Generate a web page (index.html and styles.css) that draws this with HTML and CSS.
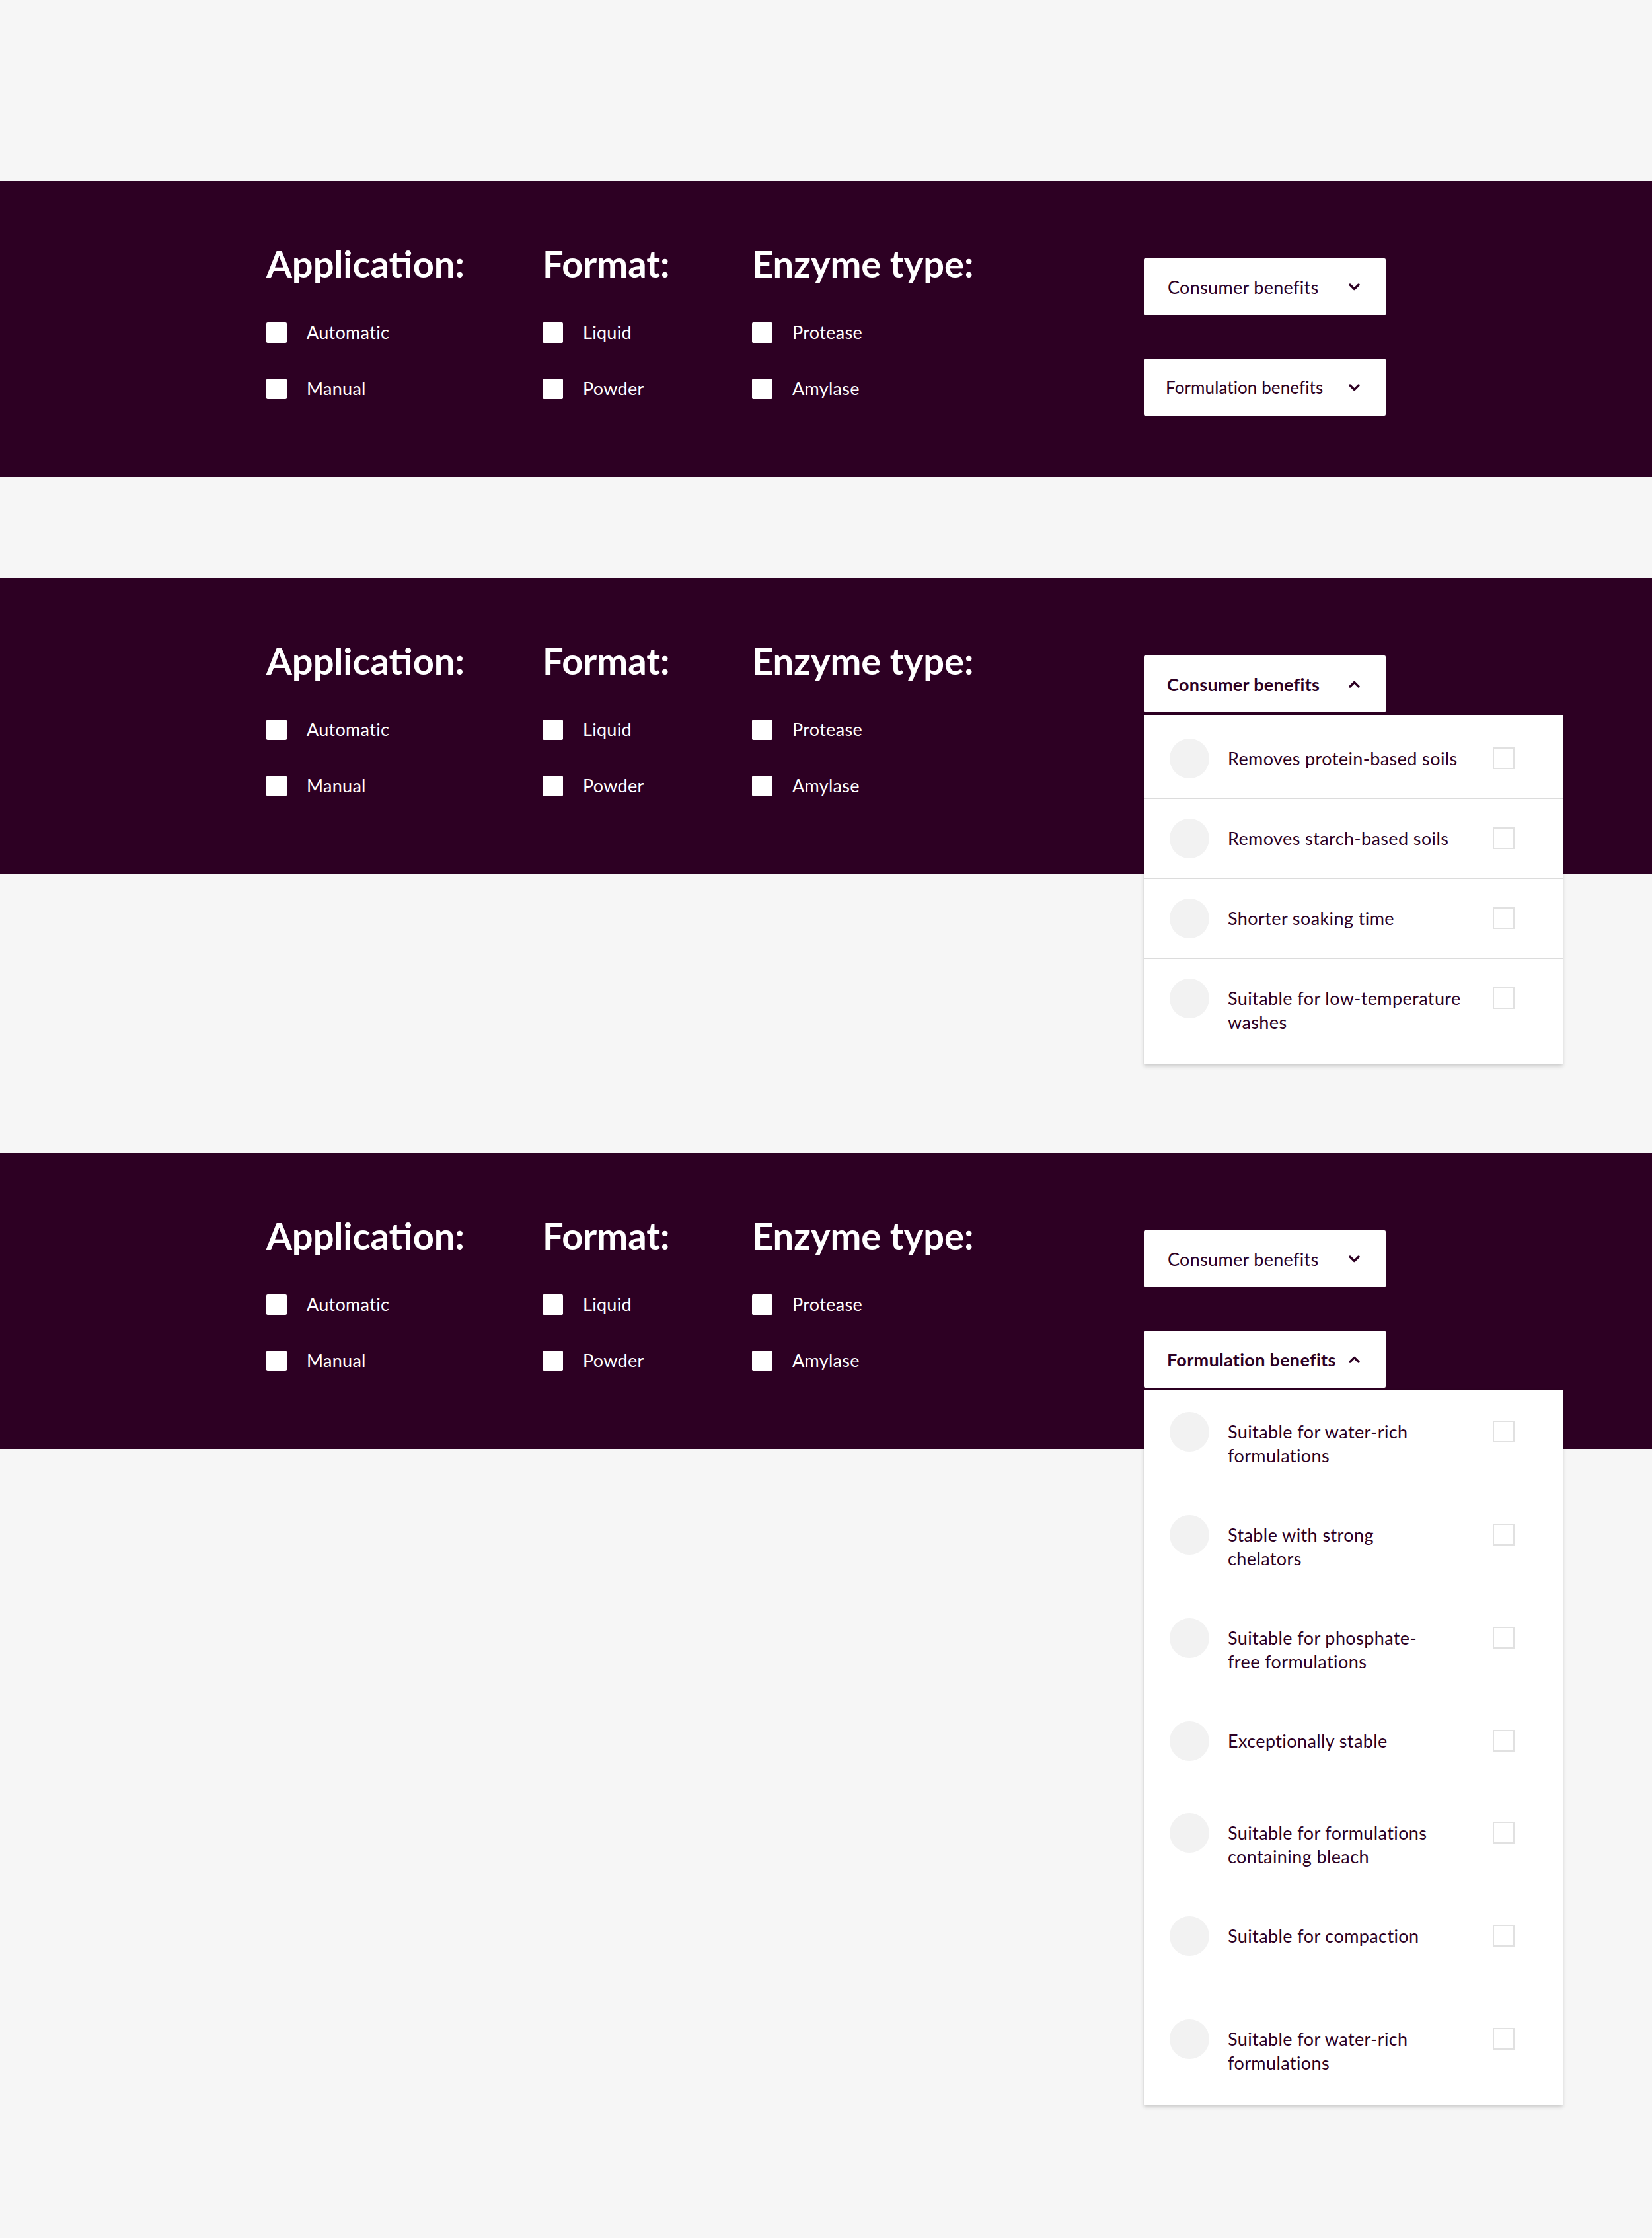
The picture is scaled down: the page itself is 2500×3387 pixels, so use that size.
FILE: index.html
```html
<!DOCTYPE html>
<html lang="en">
<head>
<meta charset="utf-8">
<title>Enzyme filters</title>
<link rel="stylesheet" href="styles.css">
</head>
<body>
<main class="page">

  <!-- State 1: both closed -->
  <section class="filters filters--one">
    <div class="filters__inner">
      <div class="group group--application">
        <h2 class="group__title">Application:</h2>
        <ul class="options">
          <li class="option"><span class="option__box"></span><span class="option__label">Automatic</span></li>
          <li class="option"><span class="option__box"></span><span class="option__label">Manual</span></li>
        </ul>
      </div>
      <div class="group group--format">
        <h2 class="group__title">Format:</h2>
        <ul class="options">
          <li class="option"><span class="option__box"></span><span class="option__label">Liquid</span></li>
          <li class="option"><span class="option__box"></span><span class="option__label">Powder</span></li>
        </ul>
      </div>
      <div class="group group--enzyme">
        <h2 class="group__title">Enzyme type:</h2>
        <ul class="options">
          <li class="option"><span class="option__box"></span><span class="option__label">Protease</span></li>
          <li class="option"><span class="option__box"></span><span class="option__label">Amylase</span></li>
        </ul>
      </div>
      <div class="dropdowns">
        <div class="dropdown">
          <button class="dropdown__toggle" type="button"><span>Consumer benefits</span><svg class="chev" viewBox="0 0 17 11" width="17" height="11"><polyline points="2,2 8.5,8.5 15,2"/></svg></button>
        </div>
        <div class="dropdown">
          <button class="dropdown__toggle dropdown__toggle--small" type="button"><span>Formulation benefits</span><svg class="chev" viewBox="0 0 17 11" width="17" height="11"><polyline points="2,2 8.5,8.5 15,2"/></svg></button>
        </div>
      </div>
    </div>
  </section>

  <!-- State 2: consumer benefits open -->
  <section class="filters filters--two">
    <div class="filters__inner">
      <div class="group group--application">
        <h2 class="group__title">Application:</h2>
        <ul class="options">
          <li class="option"><span class="option__box"></span><span class="option__label">Automatic</span></li>
          <li class="option"><span class="option__box"></span><span class="option__label">Manual</span></li>
        </ul>
      </div>
      <div class="group group--format">
        <h2 class="group__title">Format:</h2>
        <ul class="options">
          <li class="option"><span class="option__box"></span><span class="option__label">Liquid</span></li>
          <li class="option"><span class="option__box"></span><span class="option__label">Powder</span></li>
        </ul>
      </div>
      <div class="group group--enzyme">
        <h2 class="group__title">Enzyme type:</h2>
        <ul class="options">
          <li class="option"><span class="option__box"></span><span class="option__label">Protease</span></li>
          <li class="option"><span class="option__box"></span><span class="option__label">Amylase</span></li>
        </ul>
      </div>
      <div class="dropdowns">
        <div class="dropdown">
          <button class="dropdown__toggle dropdown__toggle--open" type="button"><span>Consumer benefits</span><svg class="chev" viewBox="0 0 17 11" width="17" height="11"><polyline points="2,9 8.5,2.5 15,9"/></svg></button>
          <ul class="panel panel--consumer">
            <li class="panel__item"><span class="panel__icon"></span><span class="panel__text">Removes protein-based soils</span><span class="panel__check"></span></li>
            <li class="panel__item"><span class="panel__icon"></span><span class="panel__text">Removes starch-based soils</span><span class="panel__check"></span></li>
            <li class="panel__item"><span class="panel__icon"></span><span class="panel__text">Shorter soaking time</span><span class="panel__check"></span></li>
            <li class="panel__item"><span class="panel__icon"></span><span class="panel__text">Suitable for low-temperature<br>washes</span><span class="panel__check"></span></li>
          </ul>
        </div>
      </div>
    </div>
  </section>

  <!-- State 3: formulation benefits open -->
  <section class="filters filters--three">
    <div class="filters__inner">
      <div class="group group--application">
        <h2 class="group__title">Application:</h2>
        <ul class="options">
          <li class="option"><span class="option__box"></span><span class="option__label">Automatic</span></li>
          <li class="option"><span class="option__box"></span><span class="option__label">Manual</span></li>
        </ul>
      </div>
      <div class="group group--format">
        <h2 class="group__title">Format:</h2>
        <ul class="options">
          <li class="option"><span class="option__box"></span><span class="option__label">Liquid</span></li>
          <li class="option"><span class="option__box"></span><span class="option__label">Powder</span></li>
        </ul>
      </div>
      <div class="group group--enzyme">
        <h2 class="group__title">Enzyme type:</h2>
        <ul class="options">
          <li class="option"><span class="option__box"></span><span class="option__label">Protease</span></li>
          <li class="option"><span class="option__box"></span><span class="option__label">Amylase</span></li>
        </ul>
      </div>
      <div class="dropdowns">
        <div class="dropdown">
          <button class="dropdown__toggle" type="button"><span>Consumer benefits</span><svg class="chev" viewBox="0 0 17 11" width="17" height="11"><polyline points="2,2 8.5,8.5 15,2"/></svg></button>
        </div>
        <div class="dropdown">
          <button class="dropdown__toggle dropdown__toggle--open" type="button"><span>Formulation benefits</span><svg class="chev" viewBox="0 0 17 11" width="17" height="11"><polyline points="2,9 8.5,2.5 15,9"/></svg></button>
          <ul class="panel">
            <li class="panel__item"><span class="panel__icon"></span><span class="panel__text">Suitable for water-rich<br>formulations</span><span class="panel__check"></span></li>
            <li class="panel__item"><span class="panel__icon"></span><span class="panel__text">Stable with strong<br>chelators</span><span class="panel__check"></span></li>
            <li class="panel__item"><span class="panel__icon"></span><span class="panel__text">Suitable for phosphate-<br>free formulations</span><span class="panel__check"></span></li>
            <li class="panel__item panel__item--mid"><span class="panel__icon"></span><span class="panel__text">Exceptionally stable</span><span class="panel__check"></span></li>
            <li class="panel__item"><span class="panel__icon"></span><span class="panel__text">Suitable for formulations<br>containing bleach</span><span class="panel__check"></span></li>
            <li class="panel__item panel__item--tall"><span class="panel__icon"></span><span class="panel__text">Suitable for compaction</span><span class="panel__check"></span></li>
            <li class="panel__item"><span class="panel__icon"></span><span class="panel__text">Suitable for water-rich<br>formulations</span><span class="panel__check"></span></li>
          </ul>
        </div>
      </div>
    </div>
  </section>

</main>
</body>
</html>
```

FILE: styles.css
```css
*, *::before, *::after {
  box-sizing: border-box;
}

html, body {
  margin: 0;
  padding: 0;
  background: #f6f6f6;
}

body {
  font-family: Lato, "Noto Sans", "Liberation Sans", sans-serif;
  color: #2d0023;
  min-height: 3387px;
}

.page {
  padding-top: 274px;
}

.filters {
  background: #2d0023;
  height: 448px;
  padding: 92px 0 0 403px;
}

.filters--one {
  margin-bottom: 153px;
}

.filters--two {
  margin-bottom: 422px;
}

.filters__inner {
  display: flex;
  align-items: flex-start;
}

.group--application { width: 418px; }
.group--format { width: 317px; }
.group--enzyme { width: 593px; }

.group__title {
  margin: 0;
  font-size: 56px;
  line-height: 66px;
  font-weight: 700;
  color: #fff;
}

.options {
  list-style: none;
  margin: 51px 0 0;
  padding: 0;
  display: flex;
  flex-direction: column;
  gap: 45px;
}

.option {
  display: flex;
  align-items: center;
  height: 40px;
  gap: 30px;
}

.option__box {
  width: 31px;
  height: 31px;
  background: #fff;
  border-radius: 2px;
  flex: none;
}

.option__label {
  font-size: 27px;
  line-height: 36px;
  letter-spacing: 0.3px;
  color: #fff;
}

.dropdowns {
  display: flex;
  flex-direction: column;
  gap: 66px;
  margin-top: 25px;
}

.dropdown {
  position: relative;
  width: 366px;
}

.dropdown__toggle {
  width: 366px;
  height: 86px;
  display: flex;
  align-items: center;
  justify-content: space-between;
  padding: 0 39px 0 36px;
  background: #fff;
  border: 0;
  border-radius: 2px;
  font-family: inherit;
  font-size: 27px;
  font-weight: 400;
  letter-spacing: 0.3px;
  color: #2d0023;
  cursor: pointer;
}

.dropdown__toggle--small {
  font-size: 26px;
  letter-spacing: 0.1px;
  padding-left: 33px;
}

.dropdown__toggle--open {
  font-weight: 700;
  padding-left: 35px;
}

.chev {
  flex: none;
  fill: none;
  stroke: #2d0023;
  stroke-width: 3.4;
  stroke-linecap: round;
  stroke-linejoin: round;
}

.panel {
  position: absolute;
  top: calc(100% + 4px);
  left: 0;
  z-index: 2;
  width: 634px;
  margin: 0;
  padding: 3px 0 5px;
  list-style: none;
  background: #fff;
  box-shadow: 0 3px 6px rgba(0, 0, 0, 0.16), 0 0 2px rgba(0, 0, 0, 0.06);
}

.panel--consumer {
  padding-top: 6px;
}

.panel__item {
  display: flex;
  align-items: flex-start;
  padding: 30px 73px 30px 39px;
  border-bottom: 1px solid #dcdcdc;
}

.panel__item:last-child {
  border-bottom: 0;
}

.panel__item--mid {
  min-height: 139px;
}

.panel__item--tall {
  min-height: 156px;
}

.panel__icon {
  flex: none;
  width: 60px;
  height: 60px;
  margin-right: 28px;
  border-radius: 50%;
  background: #f2f2f2;
}

.panel__text {
  flex: 1;
  padding: 12px 0 11px;
  font-size: 27px;
  line-height: 36px;
  letter-spacing: 0.4px;
  color: #2d0023;
}

.panel__check {
  flex: none;
  width: 33px;
  height: 33px;
  margin-top: 13px;
  margin-left: auto;
  border: 2px solid #e1e1e1;
  background: #fff;
}
```
